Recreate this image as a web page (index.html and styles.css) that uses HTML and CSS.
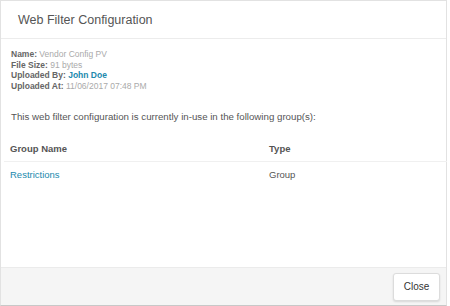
FILE: index.html
```html
<!DOCTYPE html>
<html lang="en">
<head>
  <meta charset="UTF-8" />
  <title>Web Filter Configuration</title>
  <link rel="stylesheet" href="styles.css">
</head>
<body>
  <div class="modal">
    <div class="modal-header">Web Filter Configuration</div>

    <div class="modal-body">
      <div class="info">
        <div><b>Name:</b> <span class="value">Vendor Config PV</span></div>
        <div><b>File Size:</b> <span class="value">91 bytes</span></div>
        <div><b>Uploaded By:</b> <a class="link" href="#">John Doe</a></div>
        <div><b>Uploaded At:</b> <span class="value">11/06/2017 07:48 PM</span></div>
      </div>

      <p class="note">This web filter configuration is currently in-use in the following group(s):</p>

      <table class="groups">
        <thead>
          <tr>
            <th class="col-name">Group Name</th>
            <th>Type</th>
          </tr>
        </thead>
        <tbody>
          <tr>
            <td><a class="link" href="#">Restrictions</a></td>
            <td>Group</td>
          </tr>
        </tbody>
      </table>
    </div>

    <div class="modal-footer">
      <button class="btn">Close</button>
    </div>
  </div>
</body>
</html>
```

FILE: styles.css
```css
* {
  box-sizing: border-box;
}

html, body {
  margin: 0;
  background: #fff;
  font-family: 'Liberation Sans', Arial, sans-serif;
  color: #555;
}

.modal {
  width: 447px;
  height: 306px;
  border: 1px solid #e2e2e2;
  border-bottom-color: #c8c8c8;
  display: flex;
  flex-direction: column;
  background: #fff;
}

.modal-header {
  height: 38px;
  flex: 0 0 38px;
  display: flex;
  align-items: center;
  padding: 0 17px;
  font-size: 12.5px;
  color: #555;
  border-bottom: 1px solid #ececec;
}

.modal-body {
  flex: 1;
  padding: 10px 0 0 3px;
}

.info {
  padding-left: 7px;
  font-size: 8.5px;
  line-height: 10.5px;
  color: #666;
}

.info b {
  color: #666;
}

.value {
  color: #aaa;
}

.link {
  color: #2189ad;
  text-decoration: none;
  font-weight: bold;
}

.note {
  margin: 19px 0 0;
  padding-left: 7px;
  font-size: 9.7px;
  line-height: 14px;
  color: #555;
}

.groups {
  width: 443px;
  margin-top: 13px;
  border-collapse: collapse;
  font-size: 9.5px;
  color: #555;
}

.groups th {
  text-align: left;
  height: 24px;
  padding: 0 6px;
  font-weight: bold;
  border-bottom: 1px solid #f0f0f0;
}

.groups .col-name {
  width: 259px;
}

.groups td {
  height: 26px;
  padding: 0 6px;
}

.groups td .link {
  font-weight: normal;
}

.modal-footer {
  height: 38px;
  flex: 0 0 38px;
  display: flex;
  align-items: center;
  justify-content: flex-end;
  padding-right: 6px;
  background: #f5f5f5;
  border-top: 1px solid #ebebeb;
}

.btn {
  width: 47px;
  height: 28px;
  background: #fff;
  border: 1px solid #dcdcdc;
  border-radius: 3px;
  box-shadow: 0 1px 2px rgba(0, 0, 0, 0.12);
  font-family: inherit;
  font-size: 10px;
  color: #333;
  cursor: pointer;
}
```
